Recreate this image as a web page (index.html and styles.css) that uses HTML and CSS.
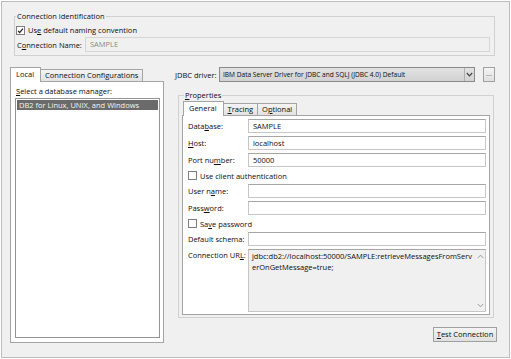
FILE: index.html
```html
<!DOCTYPE html>
<html lang="en">
<head>
    <meta charset="UTF-8">
    <title>Connection</title>
    <link rel="stylesheet" href="styles.css">
</head>
<body>
    <div class="dialog">
        <fieldset class="group ident">
            <legend>Connection identification</legend>
            <div class="check-row">
                <span class="box"><svg width="8" height="8" viewBox="0 0 8 8"><path d="M1.3 3.8 L3.1 5.9 L6.7 1.4" fill="none" stroke="#1c1c1c" stroke-width="1.4"/></svg></span>
                <span>Us<u>e</u> default naming convention</span>
            </div>
            <div class="name-row">
                <span class="name-label">C<u>o</u>nnection Name:</span>
                <div class="input disabled">SAMPLE</div>
            </div>
        </fieldset>

        <div class="main">
            <div class="left">
                <div class="tabs">
                    <div class="tab active">Local</div>
                    <div class="tab">Connection Configurations</div>
                </div>
                <div class="tab-panel db-panel">
                    <div class="caption"><u>S</u>elect a database manager:</div>
                    <div class="list">
                        <div class="item selected">DB2 for Linux, UNIX, and Windows</div>
                    </div>
                </div>
            </div>

            <div class="right">
                <div class="driver-row">
                    <span class="driver-label"><u>J</u>DBC driver:</span>
                    <div class="combo">
                        <span class="combo-text">IBM Data Server Driver for JDBC and SQLJ (JDBC 4.0) Default</span>
                        <span class="combo-arrow"><svg width="7" height="5" viewBox="0 0 7 5"><path d="M0.8 1 L3.5 3.8 L6.2 1" fill="none" stroke="#444" stroke-width="1.2"/></svg></span>
                    </div>
                    <div class="btn dots">...</div>
                </div>

                <fieldset class="group props">
                    <legend><u>P</u>roperties</legend>
                    <div class="tabs">
                        <div class="tab active">General</div>
                        <div class="tab"><u>T</u>racing</div>
                        <div class="tab">O<u>p</u>tional</div>
                    </div>
                    <div class="tab-panel form">
                        <span class="lbl">Data<u>b</u>ase:</span>
                        <div class="input">SAMPLE</div>
                        <span class="lbl"><u>H</u>ost:</span>
                        <div class="input">localhost</div>
                        <span class="lbl">Port nu<u>m</u>ber:</span>
                        <div class="input">50000</div>
                        <div class="check-row wide"><span class="box"></span><span>Use client authentication</span></div>
                        <span class="lbl">User n<u>a</u>me:</span>
                        <div class="input"></div>
                        <span class="lbl">Pass<u>w</u>ord:</span>
                        <div class="input"></div>
                        <div class="check-row wide"><span class="box"></span><span>Sa<u>v</u>e password</span></div>
                        <span class="lbl">Default schema:</span>
                        <div class="input"></div>
                        <span class="lbl top">Connection UR<u>L</u>:</span>
                        <div class="url">
                            <div class="url-text">jdbc:db2://localhost:50000/SAMPLE:retrieveMessagesFromServ<br>erOnGetMessage=true;</div>
                            <div class="scroll">
                                <svg width="7" height="5" viewBox="0 0 7 5"><path d="M0.8 4 L3.5 1.2 L6.2 4" fill="none" stroke="#9a9a9a" stroke-width="1"/></svg>
                                <svg width="7" height="5" viewBox="0 0 7 5"><path d="M0.8 1 L3.5 3.8 L6.2 1" fill="none" stroke="#9a9a9a" stroke-width="1"/></svg>
                            </div>
                        </div>
                    </div>
                </fieldset>

                <div class="actions">
                    <div class="btn test"><u>T</u>est Connection</div>
                </div>
            </div>
        </div>
    </div>
</body>
</html>
```

FILE: styles.css
```css
body {
    margin: 0;
    background: #fff;
    font-family: "Open Sans", "Noto Sans", sans-serif;
    font-size: 7.5px;
    color: #0c0c0c;
}
.dialog {
    margin: 1px;
    width: 509px;
    height: 357px;
    box-sizing: border-box;
    border: 1px solid #bcbcbc;
    background: #f0f0f0;
    padding: 9px 12px 0 8px;
}
u {
    text-decoration-thickness: 1px;
    text-underline-offset: 1px;
}

/* group boxes */
.group {
    border: 1px solid #d0d0d0;
    margin: 0;
    min-width: 0;
}
.group legend {
    padding: 0 1px;
    line-height: 10px;
}
.ident {
    margin: 0 2px 0 4px;
    padding: 0 4px 3px 1px;
}
.check-row {
    display: flex;
    align-items: center;
    gap: 3px;
    height: 10px;
}
.ident .check-row {
    margin-top: 4px;
}
.box {
    width: 7px;
    height: 7px;
    border: 1px solid #7e7e7e;
    background: #fff;
    display: flex;
}
.name-row {
    display: flex;
    align-items: center;
    margin-top: 2px;
}
.name-label {
    width: 68px;
    padding-left: 1px;
}
.input {
    flex: 1;
    height: 14px;
    box-sizing: border-box;
    border: 1px solid #c6c6c6;
    border-top-color: #a6a6a6;
    background: #fff;
    padding: 0 4px;
    line-height: 12px;
}
.name-row .input {
    height: 15px;
    line-height: 13px;
}
.input.disabled {
    background: #f0f0f0;
    color: #8a8a8a;
    border-color: #d6d6d6;
}

/* layout of the lower part */
.main {
    display: flex;
    gap: 11px;
    margin-top: 11px;
}
.left {
    width: 156px;
    display: flex;
    flex-direction: column;
}
.right {
    flex: 1;
    display: flex;
    flex-direction: column;
}

/* tabs */
.tabs {
    display: flex;
    align-items: flex-end;
    padding-left: 1px;
    position: relative;
    z-index: 1;
}
.tab {
    height: 12px;
    box-sizing: border-box;
    border: 1px solid #a4a4a4;
    border-bottom: none;
    background: linear-gradient(#f4f4f4, #e2e2e2);
    padding: 0 4px;
    line-height: 11px;
    margin-left: -1px;
}
.tab.active {
    height: 15px;
    background: #fff;
    margin-bottom: -1px;
    line-height: 13px;
    padding: 0 6px 0 5px;
}
.tab-panel {
    border: 1px solid #a4a4a4;
    background: #fff;
}
.db-panel {
    height: 262px;
    box-sizing: border-box;
    padding: 4px 3px 4px 4px;
    display: flex;
    flex-direction: column;
}
.caption {
    line-height: 10px;
    margin-left: 1px;
    margin-bottom: 2px;
}
.list {
    flex: 1;
    border: 1px solid #949494;
    background: #fff;
    padding: 1px;
}
.item {
    line-height: 10px;
    padding: 0 2px;
}
.item.selected {
    background: #6a6a6a;
    color: #f4f4f4;
}

/* driver row */
.driver-row {
    display: flex;
    align-items: center;
    height: 15px;
}
.driver-label {
    width: 44px;
}
.combo {
    width: 256px;
    height: 15px;
    box-sizing: border-box;
    border: 1px solid #8a8a8a;
    background: linear-gradient(#e2e2e2, #d2d2d2);
    display: flex;
    align-items: center;
}
.combo-text {
    flex: 1;
    padding-left: 3px;
    font-size: 6.6px;
    white-space: nowrap;
    overflow: hidden;
}
.combo-arrow {
    width: 9px;
    height: 13px;
    border-left: 1px solid #b0b0b0;
    display: flex;
    align-items: center;
    justify-content: center;
}
.btn {
    box-sizing: border-box;
    border: 1px solid #a0a0a0;
    background: linear-gradient(#f4f4f4, #e0e0e0);
    text-align: center;
}
.dots {
    width: 12px;
    height: 15px;
    margin-left: 8px;
    line-height: 10px;
    color: #555;
}

/* properties */
.props {
    margin: 8px 3px 0 3px;
    padding: 0 3px 2px 3px;
}
.props legend {
    margin-left: 2px;
}
.props .tabs {
    margin-top: 1px;
    padding-left: 2px;
}
.form {
    display: grid;
    grid-template-columns: 60px 1fr;
    row-gap: 3px;
    align-items: center;
    padding: 3px 3px 2px 5px;
}
.lbl {
    line-height: 10px;
}
.lbl.top {
    align-self: start;
    padding-top: 1px;
}
.wide {
    grid-column: 1 / 3;
    height: 11px;
}
.url {
    height: 63px;
    box-sizing: border-box;
    border: 1px solid #c6c6c6;
    border-top-color: #a6a6a6;
    background: #f0f0f0;
    display: flex;
}
.url-text {
    flex: 1;
    padding: 1px 3px;
    line-height: 11px;
}
.scroll {
    width: 10px;
    display: flex;
    flex-direction: column;
    justify-content: space-between;
    align-items: center;
    padding: 4px 0 3px;
}

/* bottom button */
.actions {
    display: flex;
    justify-content: flex-end;
    margin-top: 9px;
}
.test {
    width: 64px;
    height: 15px;
    line-height: 13px;
}
```
